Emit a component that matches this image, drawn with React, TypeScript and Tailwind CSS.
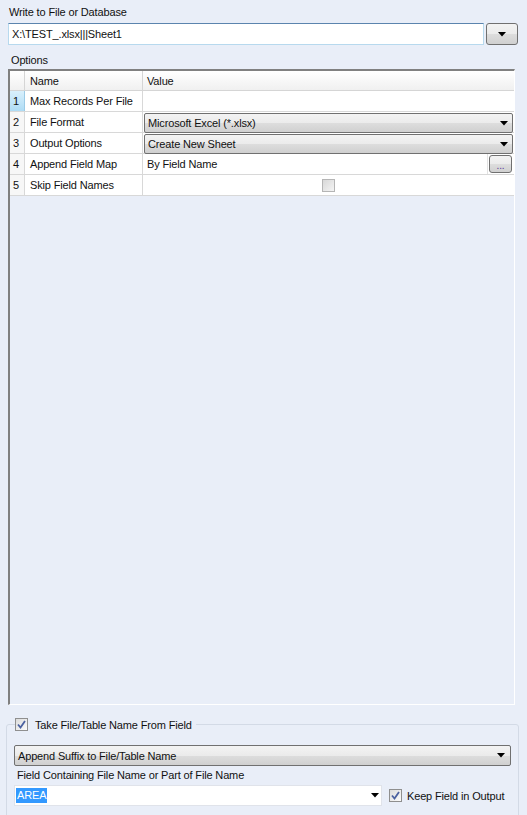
import React from "react";

const Tri = () => (
  <svg width="8" height="5" viewBox="0 0 8 5">
    <polygon points="0,0 8,0 4,4.5" fill="#000" />
  </svg>
);

const Check = ({ checked, disabled }: { checked?: boolean; disabled?: boolean }) => (
  <div
    className={
      "w-[13px] h-[13px] border flex items-center justify-center shrink-0 " +
      (disabled
        ? "border-[#b5b5b5] bg-gradient-to-br from-[#d8d8d8] to-[#f4f4f4]"
        : "border-[#8f8f8f] bg-gradient-to-br from-[#dcdcdc] to-[#fbfbfb]")
    }
  >
    {checked && (
      <svg width="9" height="9" viewBox="0 0 9 9">
        <path d="M1 4.5 L3.5 7.5 L8 1" stroke="#4b61a0" strokeWidth="1.8" fill="none" />
      </svg>
    )}
  </div>
);

const Combo = ({ text }: { text: string }) => (
  <div className="h-[20px] mt-[1px] ml-[1px] mr-[1px] rounded-[2px] border border-[#707070] bg-[linear-gradient(#f3f3f3_0%,#ebebeb_50%,#dddddd_51%,#d0d0d0_100%)] flex items-center justify-between pl-[3px] pr-[4px]">
    <span>{text}</span>
    <Tri />
  </div>
);

export default function App() {
  const rows: { n: number; name: string; kind: string; text?: string }[] = [
    { n: 1, name: "Max Records Per File", kind: "text" },
    { n: 2, name: "File Format", kind: "combo", text: "Microsoft Excel (*.xlsx)" },
    { n: 3, name: "Output Options", kind: "combo", text: "Create New Sheet" },
    { n: 4, name: "Append Field Map", kind: "button", text: "By Field Name" },
    { n: 5, name: "Skip Field Names", kind: "check" },
  ];
  return (
    <div className="w-[527px] h-[815px] overflow-hidden bg-[#e9eef8] text-[11px] leading-[14px] tracking-[-0.15px] text-[#111] font-['Liberation_Sans',Arial,sans-serif]">
      <div className="pl-[9px] pt-[5px]">Write to File or Database</div>
      <div className="flex mt-[4px] ml-[8px]">
        <div className="w-[476px] h-[22px] bg-white border border-[#b7d9ee] border-t-[#5b84ae] flex items-center pl-[3px]">
          X:\TEST_.xlsx|||Sheet1
        </div>
        <div className="ml-[2px] w-[32px] h-[22px] rounded-[3px] border border-[#707070] bg-[linear-gradient(#f3f3f3_0%,#ebebeb_50%,#dddddd_51%,#d0d0d0_100%)] flex items-center justify-center">
          <Tri />
        </div>
      </div>
      <div className="pl-[11px] mt-[8px]">Options</div>
      <div className="ml-[8px] mt-[2px] w-[507px] h-[636px] border-t-2 border-l-2 border-t-[#808080] border-l-[#808080] border-r border-b border-r-white border-b-white flex flex-col">
        <div className="flex h-[20px] bg-gradient-to-b from-white to-[#f0f0f0] border-b border-[#d5d5d5]">
          <div className="w-[15px] border-r border-[#d5d5d5]" />
          <div className="w-[118px] border-r border-[#d5d5d5] pl-[5px] flex items-center">Name</div>
          <div className="flex-1 pl-[4px] flex items-center">Value</div>
        </div>
        {rows.map((r) => (
          <div key={r.n} className="flex h-[21px] bg-white border-b border-[#d8d8d8]">
            <div
              className={
                "w-[15px] border-r flex items-center pl-[3px] " +
                (r.n === 1
                  ? "bg-gradient-to-b from-[#d9f0fc] to-[#aedcf5] border-[#9ccbe6]"
                  : "bg-[#f7f7f7] border-[#d8d8d8]")
              }
            >
              {r.n}
            </div>
            <div className="w-[118px] border-r border-[#d8d8d8] pl-[5px] flex items-center">{r.name}</div>
            <div className="flex-1 min-w-0">
              {r.kind === "combo" && <Combo text={r.text!} />}
              {r.kind === "button" && (
                <div className="flex h-full items-center">
                  <div className="flex-1 pl-[4px]">{r.text}</div>
                  <div className="h-full border-l border-[#e2e2e2] pl-[1px] pr-[2px] flex items-center">
                    <div className="w-[23px] h-[18px] rounded-[3px] border border-[#707070] bg-[linear-gradient(#f3f3f3_0%,#ebebeb_50%,#dddddd_51%,#d0d0d0_100%)] flex items-end justify-center pb-[2px] leading-[8px] text-[10px] text-[#5a3a9a]">
                      ...
                    </div>
                  </div>
                </div>
              )}
              {r.kind === "check" && (
                <div className="h-full flex items-center justify-center">
                  <Check disabled />
                </div>
              )}
            </div>
          </div>
        ))}
      </div>
      <fieldset className="ml-[6px] mt-[13px] w-[512px] h-[120px] border border-[#d3dae6] rounded-[3px] px-[7px]">
        <legend className="ml-[1px] pr-[4px]">
          <div className="flex items-center h-[13px]">
            <Check checked />
            <span className="ml-[7px]">Take File/Table Name From Field</span>
          </div>
        </legend>
        <div className="mt-[14px] w-[497px]">
          <div className="h-[21px] rounded-[2px] border border-[#707070] bg-[linear-gradient(#f3f3f3_0%,#ebebeb_50%,#dddddd_51%,#d0d0d0_100%)] flex items-center justify-between pl-[3px] pr-[5px]">
            <span>Append Suffix to File/Table Name</span>
            <Tri />
          </div>
        </div>
        <div className="mt-[2px] pl-[3px]">Field Containing File Name or Part of File Name</div>
        <div className="flex items-center mt-[3px]">
          <div className="w-[368px] h-[21px] bg-white border border-[#e0e3ea] flex items-center justify-between pl-[1px] pr-[2px]">
            <span className="bg-[#3399ff] text-white px-[1px] leading-[15px]">AREA</span>
            <Tri />
          </div>
          <div className="ml-[7px]">
            <Check checked />
          </div>
          <span className="ml-[5px]">Keep Field in Output</span>
        </div>
      </fieldset>
    </div>
  );
}
